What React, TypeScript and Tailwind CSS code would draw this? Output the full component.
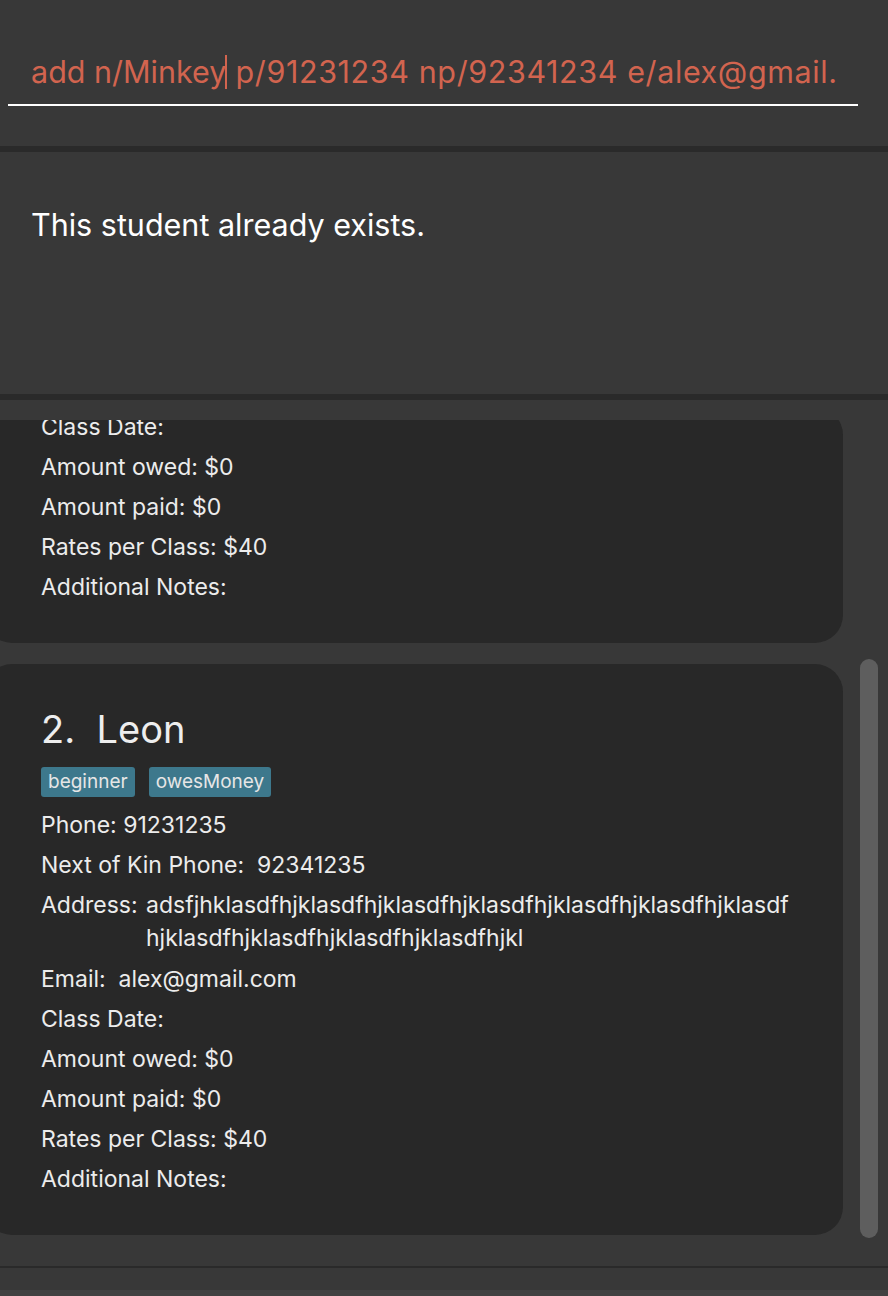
import React from "react";

const font = { fontFamily: "Inter, 'Noto Sans', sans-serif" };

function Line({ children }: { children: React.ReactNode }) {
  return <div className="h-[40px] flex items-center whitespace-pre">{children}</div>;
}

function Tag({ label }: { label: string }) {
  return (
    <span className="h-[30px] px-[7px] flex items-center rounded-[3px] bg-[#3d788c] text-[19px] text-[#e6e6e6]">
      {label}
    </span>
  );
}

export default function App() {
  return (
    <div style={font} className="w-[888px] h-[1296px] bg-[#383838] flex flex-col overflow-hidden">
      {/* command box */}
      <div className="h-[146px] flex flex-col shrink-0">
        <div className="mt-[50px] mx-[8px] w-[850px] h-[56px] border-b-2 border-white flex items-start">
          <div className="ml-[23px] w-[806px] overflow-hidden text-[30.5px] leading-[44px] text-[#d2644f] whitespace-pre">
            add n/Minkey<span className="inline-block w-[2px] h-[34px] -mb-[6px] bg-[#d2644f] mx-[-1px]" />
            <span className="tracking-[0.6px]"> p/91231234 np/92341234 e/alex@gmail.com</span>
          </div>
        </div>
      </div>
      <div className="h-[6px] bg-[#2a2a2a] shrink-0" />

      {/* result box */}
      <div className="h-[242px] shrink-0 pl-[31px] pt-[53px]">
        <div className="text-[30.5px] leading-[40px] text-white">This student already exists.</div>
      </div>
      <div className="h-[6px] bg-[#2a2a2a] shrink-0" />

      {/* list */}
      <div className="h-[866px] shrink-0 pt-[20px] flex">
        <div className="w-[843px] h-[830px] overflow-hidden text-[23px] text-[#ececec]">
          <div className="-mt-[13px] flex flex-col gap-[21px]">
            <div className="-ml-[16px] bg-[#282828] rounded-[28px] pl-[57px] pb-[36px]">
              <Line>Class Date:</Line>
              <Line>Amount owed: $0</Line>
              <Line>Amount paid: $0</Line>
              <Line>Rates per Class: $40</Line>
              <Line>Additional Notes:</Line>
            </div>
            <div className="-ml-[16px] bg-[#282828] rounded-[28px] pl-[57px] pt-[40px] pb-[36px]">
              <div className="h-[50px] flex items-center text-[38px] text-[#eeeeee] whitespace-pre">2.  Leon</div>
              <div className="mt-[13px] mb-[8px] flex gap-[14px]">
                <Tag label="beginner" />
                <Tag label="owesMoney" />
              </div>
              <Line>Phone: 91231235</Line>
              <Line>Next of Kin Phone:  92341235</Line>
              <div className="py-[4px] flex">
                <div className="w-[105px] h-[33px] flex items-center">Address:</div>
                <div className="flex flex-col">
                  <div className="h-[33px] flex items-center">adsfjhklasdfhjklasdfhjklasdfhjklasdfhjklasdfhjklasdfhjklasdf</div>
                  <div className="h-[33px] flex items-center">hjklasdfhjklasdfhjklasdfhjklasdfhjkl</div>
                </div>
              </div>
              <Line>Email:  alex@gmail.com</Line>
              <Line>Class Date:</Line>
              <Line>Amount owed: $0</Line>
              <Line>Amount paid: $0</Line>
              <Line>Rates per Class: $40</Line>
              <Line>Additional Notes:</Line>
            </div>
          </div>
        </div>
        <div className="ml-[17px] mt-[239px] w-[18px] h-[579px] rounded-full bg-[#5e5e5e]" />
      </div>

      <div className="h-[2px] bg-[#2a2a2a] shrink-0" />
      <div className="h-[22px] shrink-0" />
      <div className="flex-1 bg-[#424242]" />
    </div>
  );
}
